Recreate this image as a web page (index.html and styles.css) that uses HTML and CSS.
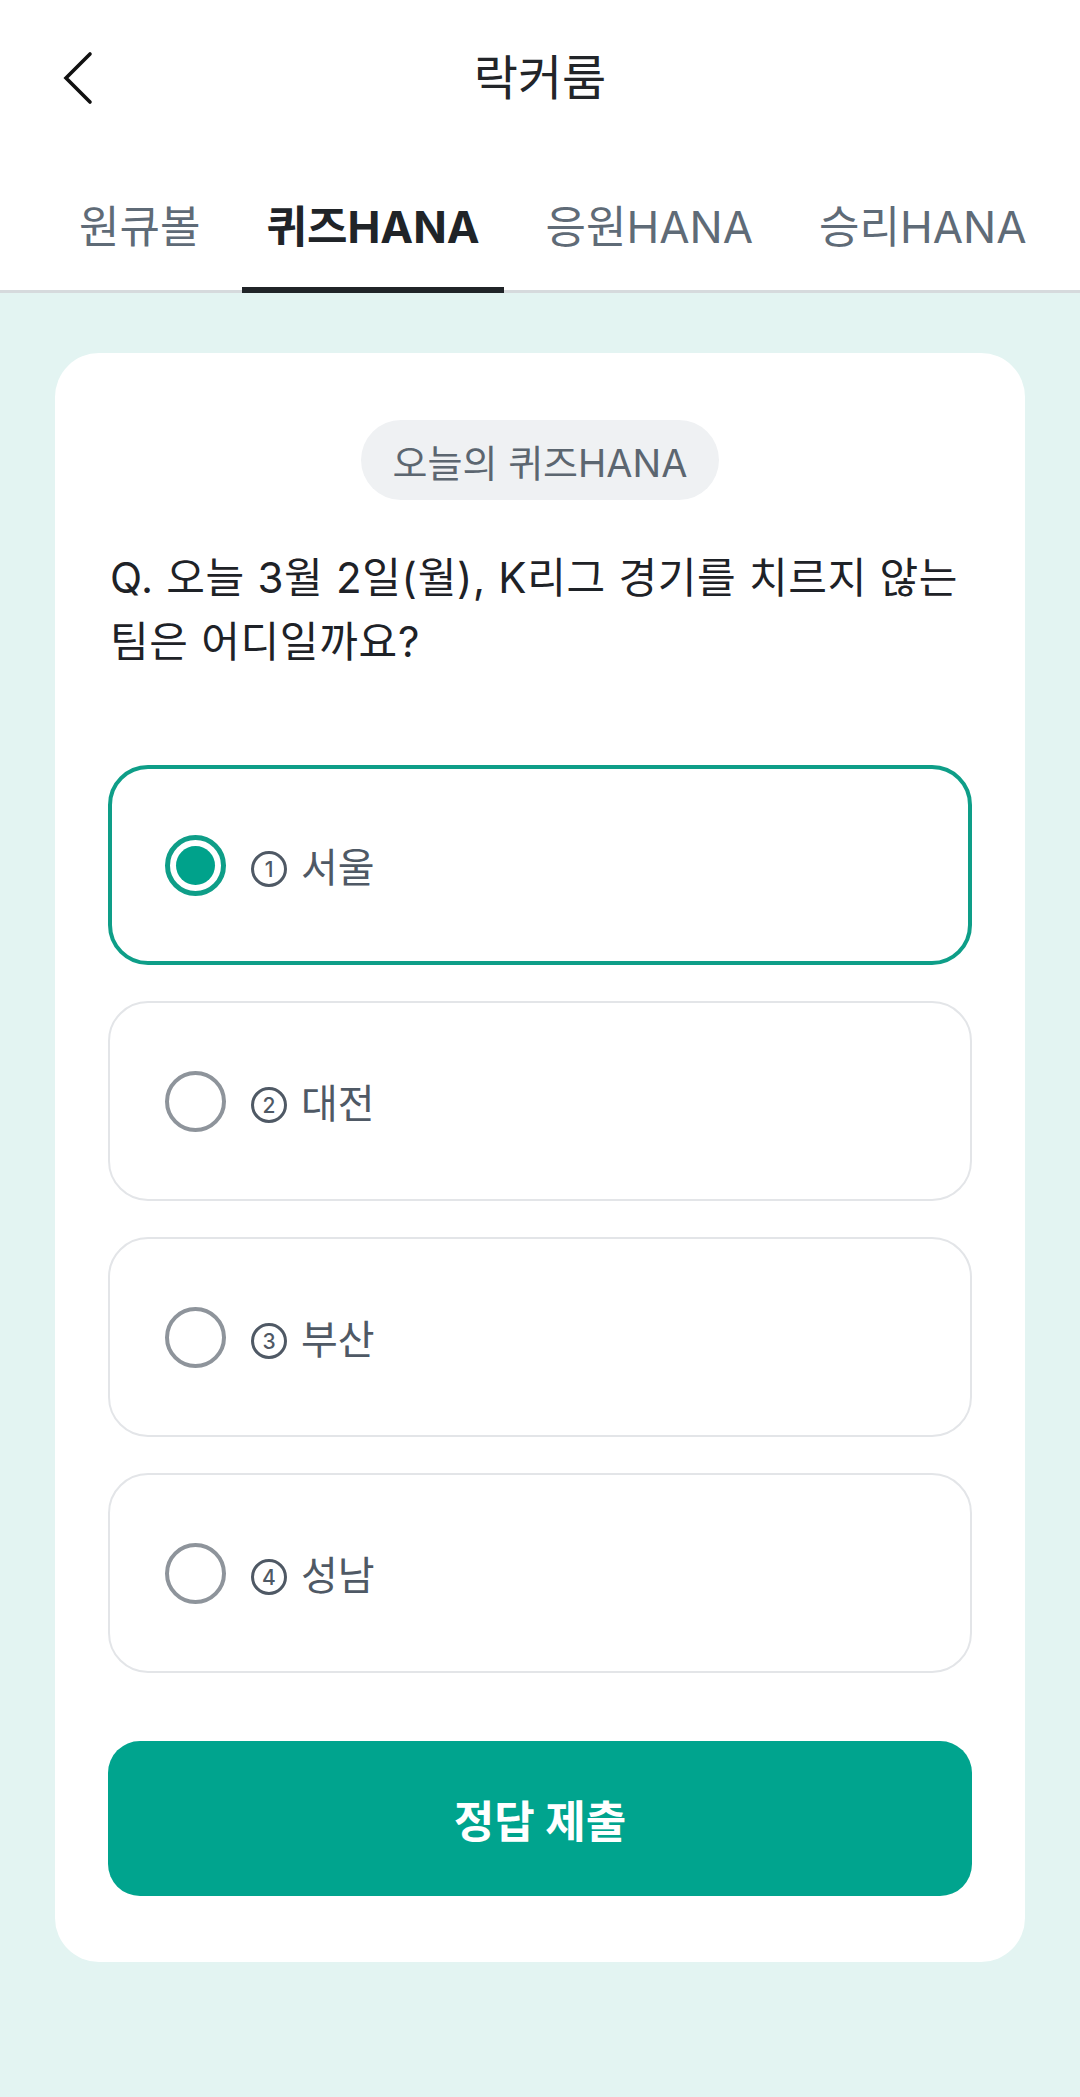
FILE: index.html
```html
<!DOCTYPE html>
<html lang="ko">
<head>
    <meta charset="UTF-8">
    <meta name="viewport" content="width=device-width, initial-scale=1.0">
    <title>락커룸</title>
    <link rel="stylesheet" href="styles.css">
</head>
<body>
    <header class="topbar">
        <button class="back-btn" aria-label="뒤로">
            <svg width="34" height="54" viewBox="0 0 34 54">
                <polyline points="29,3 5,27 29,51" fill="none" stroke="#111" stroke-width="3.6" stroke-linecap="round" stroke-linejoin="miter"/>
            </svg>
        </button>
        <h1 class="title">락커룸</h1>
    </header>

    <nav class="tabs">
        <div class="tab">원큐볼</div>
        <div class="tab active">퀴즈HANA</div>
        <div class="tab">응원HANA</div>
        <div class="tab">승리HANA</div>
    </nav>

    <main class="content">
        <section class="quiz-card">
            <div class="badge-row">
                <span class="badge">오늘의 퀴즈HANA</span>
            </div>
            <p class="question">Q. 오늘 3월 2일(월), K리그 경기를 치르지 않는 팀은 어디일까요?</p>

            <div class="options">
                <label class="option selected">
                    <span class="radio"></span>
                    <span class="num">1</span>
                    <span class="label">서울</span>
                </label>
                <label class="option">
                    <span class="radio"></span>
                    <span class="num">2</span>
                    <span class="label">대전</span>
                </label>
                <label class="option">
                    <span class="radio"></span>
                    <span class="num">3</span>
                    <span class="label">부산</span>
                </label>
                <label class="option">
                    <span class="radio"></span>
                    <span class="num">4</span>
                    <span class="label">성남</span>
                </label>
            </div>

            <button class="submit-btn">정답 제출</button>
        </section>
    </main>

    <script>
        // Select an option
        document.querySelectorAll('.option').forEach(option => {
            option.addEventListener('click', () => {
                document.querySelectorAll('.option').forEach(o => o.classList.remove('selected'));
                option.classList.add('selected');
            });
        });
    </script>
</body>
</html>
```

FILE: styles.css
```css
* {
    box-sizing: border-box;
}

body {
    margin: 0;
    min-height: 100vh;
    background: #e3f4f2;
    font-family: Inter, "Noto Sans CJK KR", sans-serif;
    color: #1f2328;
}

.topbar {
    position: relative;
    height: 156px;
    background: #fff;
    display: flex;
    align-items: center;
    justify-content: center;
}

.back-btn {
    position: absolute;
    left: 61px;
    top: 51px;
    padding: 0;
    border: none;
    background: none;
    cursor: pointer;
    display: flex;
}

.title {
    margin: 0;
    font-size: 48px;
    font-weight: 400;
    color: #222529;
    line-height: 1;
}

.tabs {
    display: flex;
    gap: 18px;
    padding-left: 55px;
    background: #fff;
    border-bottom: 3px solid #d6dadd;
}

.tab {
    padding: 47px 24px 36px;
    line-height: 48px;
    font-size: 44px;
    color: #5f6b77;
    border-bottom: 6px solid transparent;
    margin-bottom: -3px;
    white-space: nowrap;
}

.tab.active {
    color: #202428;
    font-weight: 700;
    border-bottom-color: #202428;
}

.content {
    padding: 60px 55px 0;
}

.quiz-card {
    background: #fff;
    border-radius: 44px;
    padding: 67px 53px 66px;
}

.badge-row {
    display: flex;
    justify-content: center;
}

.badge {
    height: 80px;
    padding: 0 32px;
    border-radius: 40px;
    background: #eff1f3;
    color: #5c6670;
    font-size: 38px;
    display: flex;
    align-items: center;
}

.question {
    margin: 46px 0 0;
    padding-left: 2px;
    font-size: 42px;
    line-height: 64px;
    letter-spacing: 0.7px;
    font-weight: 400;
    color: #1e2227;
    word-break: keep-all;
}

.options {
    margin-top: 91px;
    display: flex;
    flex-direction: column;
    gap: 36px;
}

.option {
    height: 200px;
    border: 2px solid #e3e5e8;
    border-radius: 40px;
    padding-left: 55px;
    display: flex;
    align-items: center;
    cursor: pointer;
}

.option.selected {
    border: 4px solid #0e9e88;
    padding-left: 53px;
}

.radio {
    width: 61px;
    height: 61px;
    border-radius: 50%;
    border: 4px solid #8e949b;
    position: relative;
    flex-shrink: 0;
}

.option.selected .radio {
    border: 5px solid #0e9e88;
}

.option.selected .radio::after {
    content: "";
    position: absolute;
    top: 6px;
    left: 6px;
    width: 39px;
    height: 39px;
    border-radius: 50%;
    background: #00a28b;
}

.num {
    margin: 8px 0 0 25px;
    width: 36px;
    height: 36px;
    border-radius: 50%;
    border: 3px solid #4f5965;
    color: #4f5965;
    font-size: 21px;
    font-weight: 500;
    display: flex;
    align-items: center;
    justify-content: center;
    flex-shrink: 0;
}

.label {
    margin-left: 14px;
    font-size: 40px;
    color: #4f5965;
}

.submit-btn {
    display: block;
    width: 100%;
    height: 155px;
    margin-top: 68px;
    border: none;
    border-radius: 32px;
    background: #00a48e;
    color: #fff;
    font-family: inherit;
    font-size: 44px;
    font-weight: 700;
    cursor: pointer;
}
```
